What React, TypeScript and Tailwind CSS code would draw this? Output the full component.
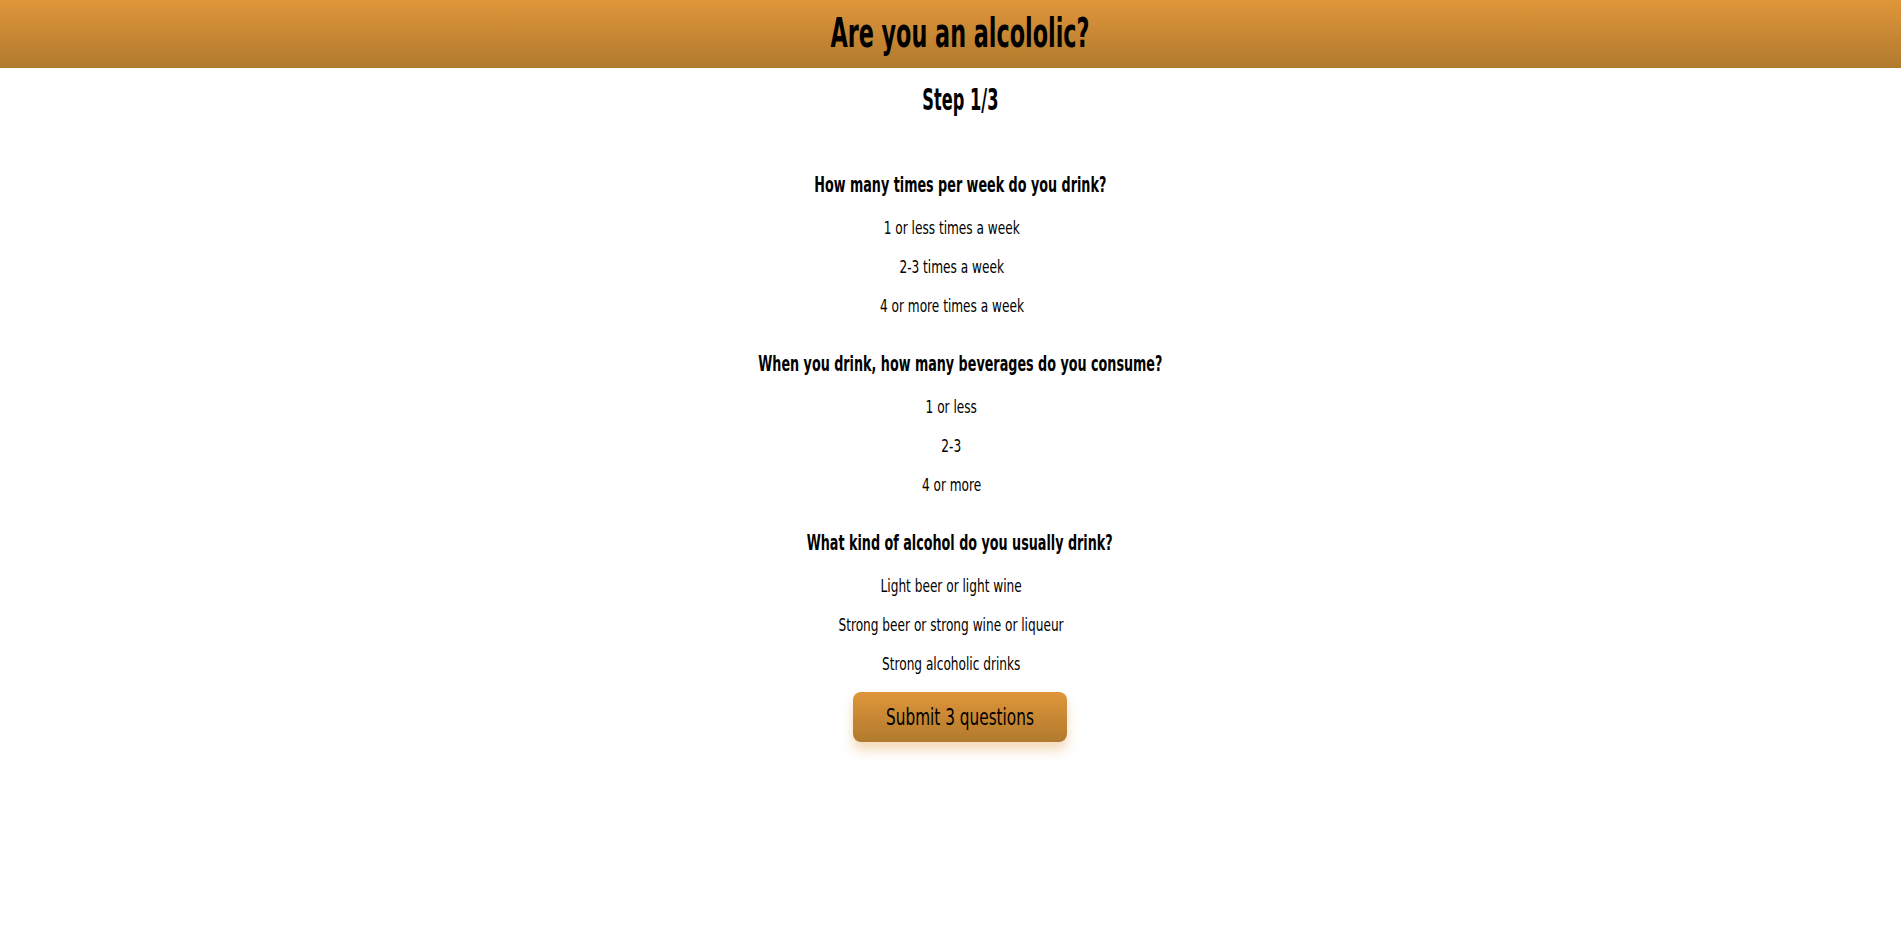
import React, { useState } from "react";

type Question = {
  id: string;
  title: string;
  options: string[];
};

const questions: Question[] = [
  {
    id: "frequency",
    title: "How many times per week do you drink?",
    options: ["1 or less times a week", "2-3 times a week", "4 or more times a week"],
  },
  {
    id: "amount",
    title: "When you drink, how many beverages do you consume?",
    options: ["1 or less", "2-3", "4 or more"],
  },
  {
    id: "kind",
    title: "What kind of alcohol do you usually drink?",
    options: ["Light beer or light wine", "Strong beer or strong wine or liqueur", "Strong alcoholic drinks"],
  },
];

const font = "font-['DejaVu_Sans_Condensed','DejaVu_Sans',sans-serif]";

export default function App() {
  const [answers, setAnswers] = useState<Record<string, number>>({});

  return (
    <div className={`min-h-[933px] bg-white text-black ${font}`}>
      <header className="flex h-[68px] items-center justify-center bg-gradient-to-b from-[#e0963a] to-[#b17a2d] pl-[19px]">
        <h1 className="inline-block scale-x-[0.62] whitespace-nowrap pb-[3px] text-[40px] font-bold leading-none">
          Are you an alcololic?
        </h1>
      </header>

      <main className="flex flex-col items-center pl-[19px]">
        <h2 className="mt-[11px] flex h-[40px] scale-x-[0.6] items-center whitespace-nowrap text-[30px] font-bold">
          Step 1/3
        </h2>

        <div className="mt-[44px] flex flex-col items-center gap-[19px]">
          {questions.map((q) => (
            <div key={q.id} className="flex flex-col items-center">
              <h3 className="flex h-[43px] scale-x-[0.675] items-center whitespace-nowrap pt-[2px] text-[21px] font-bold">
                {q.title}
              </h3>
              {q.options.map((opt, i) => (
                <label
                  key={opt}
                  className="mr-[17px] flex h-[39px] cursor-pointer scale-x-[0.75] items-center whitespace-nowrap pt-[3px] text-[18px]"
                  onClick={() => setAnswers({ ...answers, [q.id]: i })}
                >
                  <input type="radio" name={q.id} className="hidden" checked={answers[q.id] === i} readOnly />
                  {opt}
                </label>
              ))}
            </div>
          ))}
        </div>

        <button
          type="button"
          className="mt-[11px] flex h-[50px] w-[214px] items-center justify-center rounded-lg bg-gradient-to-b from-[#e0963a] to-[#b17a2d] shadow-[0_8px_12px_rgba(224,150,58,0.35)]"
        >
          <span className="inline-block scale-x-[0.74] whitespace-nowrap text-[23px]">Submit 3 questions</span>
        </button>
      </main>
    </div>
  );
}
